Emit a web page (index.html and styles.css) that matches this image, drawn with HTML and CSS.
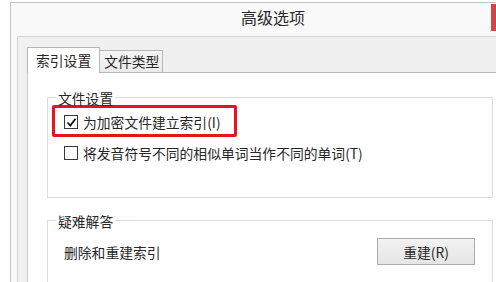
FILE: index.html
```html
<!DOCTYPE html>
<html lang="zh-CN">
<head>
<meta charset="utf-8">
<title>高级选项</title>
<link rel="stylesheet" href="styles.css">
</head>
<body>
<div class="window">
  <div class="titlebar">
    <span class="title">高级选项</span>
    <span class="close"></span>
  </div>
  <div class="client">
    <div class="tabs">
      <div class="tab active">索引设置</div>
      <div class="tab">文件类型</div>
    </div>
    <div class="panel">
      <div class="group group-files">
        <div class="group-label">文件设置</div>
        <div class="highlight">
          <label class="check-row">
            <span class="checkbox checked">
              <svg width="11" height="11" viewBox="0 0 11 11"><path d="M1.5 5.5 L4.3 8.5 L9.5 1.8" fill="none" stroke="#111" stroke-width="1.8"/></svg>
            </span>
            <span>为加密文件建立索引(I)</span>
          </label>
        </div>
        <label class="check-row row2">
          <span class="checkbox"></span>
          <span>将发音符号不同的相似单词当作不同的单词(T)</span>
        </label>
      </div>
      <div class="group group-trouble">
        <div class="group-label">疑难解答</div>
        <div class="action-row">
          <span>删除和重建索引</span>
          <button class="btn">重建(R)</button>
        </div>
      </div>
    </div>
  </div>
</div>
</body>
</html>
```
FILE: styles.css
```css
html, body {
  margin: 0;
  padding: 0;
  background: #ffffff;
}
body {
  width: 496px;
  height: 282px;
  overflow: hidden;
  font-family: "Noto Sans CJK SC", "Noto Sans", sans-serif;
  font-size: 13.8px;
  color: #262626;
}
.window {
  margin: 2px 0 0 10px;
  width: 486px;
  height: 300px;
  border-top: 1px solid #c4c4c4;
  border-left: 1px solid #c4c4c4;
  background: #f9f9f9;
  padding: 0 0 0 6px;
  box-sizing: border-box;
}
.titlebar {
  height: 33px;
  margin: 0 0 0 -6px;
  box-sizing: border-box;
  padding: 0 0 4px 0;
  display: flex;
  align-items: flex-start;
}
.title {
  flex: 1;
  text-align: center;
  padding-left: 44px;
  font-size: 16px;
  line-height: 29px;
  color: #2a2a2a;
}
.close {
  display: block;
  flex: 0 0 5px;
  margin-top: 1px;
  width: 5px;
  height: 27px;
  background-color: #d04545;
}
.client {
  background: #f0f0f0;
  border-top: 1px solid #d6d6d6;
  border-left: 1px solid #d6d6d6;
  padding: 10px 0 0 9px;
  height: 280px;
}
.tabs {
  display: flex;
  align-items: flex-end;
  height: 25px;
}
.tab {
  box-sizing: border-box;
  height: 22px;
  line-height: 21px;
  padding: 0 3px 0 4px;
  border: 1px solid #b6b6b6;
  border-bottom: none;
  border-left: none;
  background: linear-gradient(#f4f4f4, #ebebeb);
  color: #262626;
}
.tab.active {
  position: relative;
  z-index: 1;
  height: 26px;
  margin-bottom: -1px;
  line-height: 24px;
  padding: 0 8px 0 8px;
  border-left: 1px solid #b6b6b6;
  background: #ffffff;
}
.panel {
  background: #ffffff;
  border-top: 1px solid #b6b6b6;
  border-left: 1px solid #c8c8c8;
  height: 260px;
}
.group {
  border: 1px solid #dcdcdc;
  margin-left: 19px;
  margin-right: 3px;
}
.group-files {
  margin-top: 24px;
  padding-bottom: 34px;
}
.group-trouble {
  margin-top: 22px;
  height: 100px;
}
.group-label {
  width: max-content;
  margin: -9px 0 0 8px;
  padding: 0 2px;
  line-height: 18px;
  background: #ffffff;
}
.highlight {
  width: 170px;
  margin: -2px 0 0 4px;
  border: 3px solid #e3161d;
  border-radius: 2px;
  padding: 2px 0 0 9px;
  box-sizing: content-box;
  height: 24px;
}
.check-row {
  display: flex;
  align-items: center;
  gap: 5px;
  line-height: 24px;
  white-space: nowrap;
}
.row2 {
  margin-top: 6px;
  padding-left: 16px;
  line-height: 20px;
}
.checkbox {
  box-sizing: border-box;
  width: 14px;
  height: 14px;
  border: 1px solid #3a3a3a;
  background: #fff;
  display: flex;
  align-items: center;
  justify-content: center;
  flex: none;
}
.action-row {
  display: flex;
  align-items: center;
  justify-content: space-between;
  margin-top: 8px;
  padding: 0 17px 0 16px;
}
.btn {
  width: 98px;
  height: 27px;
  border: 1px solid #acacac;
  background: linear-gradient(#f2f2f2, #e5e5e5);
  font-family: "Noto Sans CJK SC", "Noto Sans", sans-serif;
  font-size: 13.8px;
  color: #262626;
  padding: 0;
}
```
